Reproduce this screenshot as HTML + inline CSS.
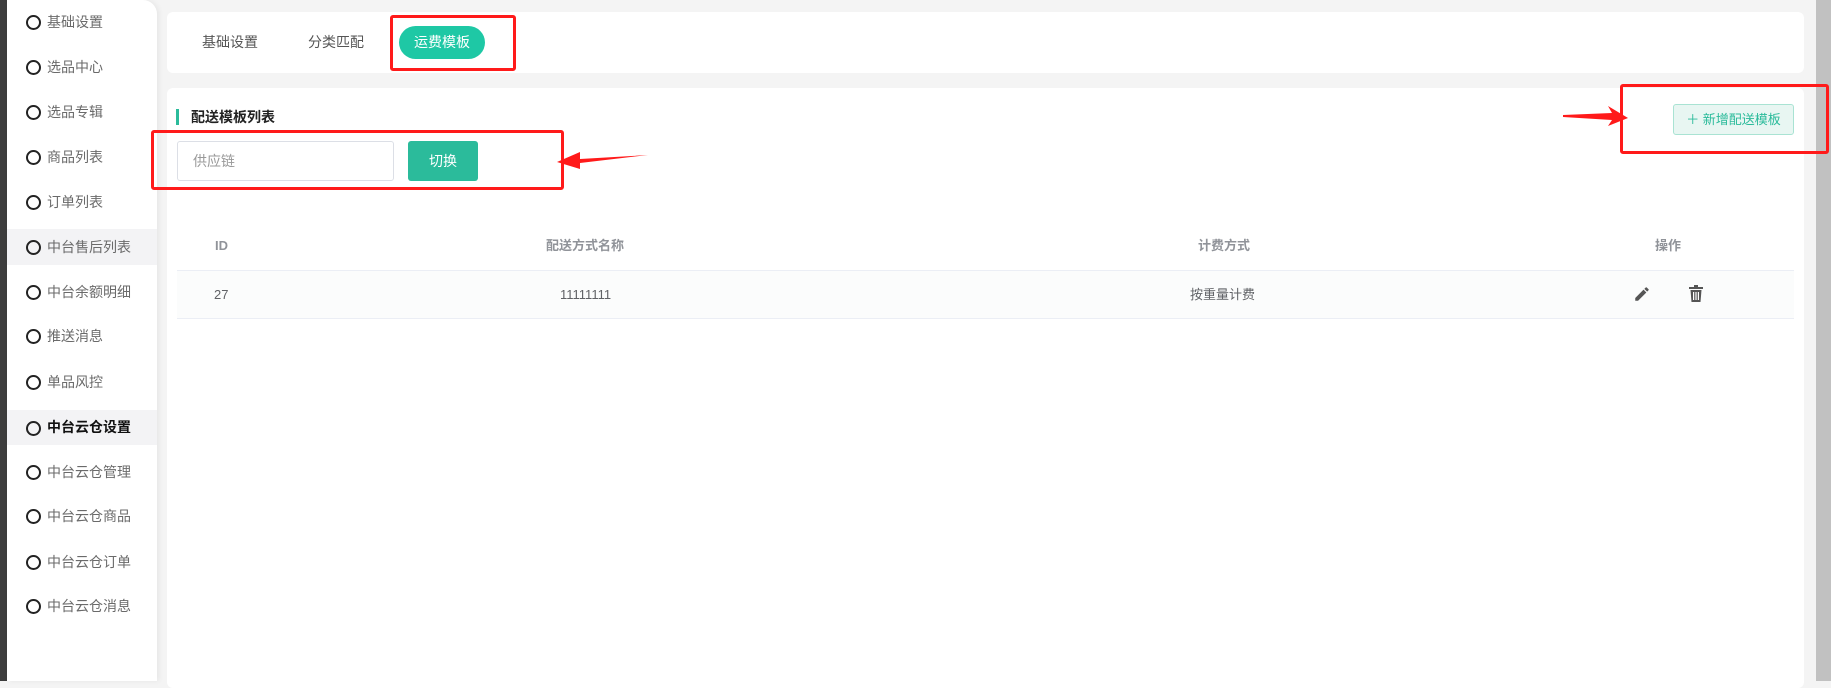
<!DOCTYPE html>
<html><head><meta charset="utf-8"><style>
*{margin:0;padding:0;box-sizing:border-box}
body{width:1831px;height:681px;overflow:hidden;background:#f4f4f4;font-family:"Liberation Sans","Noto Sans CJK SC",sans-serif;font-size:14px;color:#606266;position:relative}
.dark{position:absolute;left:0;top:0;width:7px;height:681px;background:#3d3d3d}
.side{position:absolute;left:7px;top:0;width:150px;height:681px;background:#fff;border-top-right-radius:14px;box-shadow:2px 0 6px rgba(0,0,0,.06)}
.it{position:absolute;left:0;width:150px;height:38px;line-height:38px;padding-left:40px;color:#6a6a6a;font-size:14px}
.it:before{content:"";position:absolute;left:19px;top:50%;margin-top:-7px;width:11px;height:11px;border:2px solid #222;border-radius:50%}
.it.hl{background:#f3f3f5}
.it.b{font-weight:bold;color:#111}
.card{position:absolute;left:167px;width:1637px;background:#fff;border-radius:6px}
.tab{position:absolute;top:34px;color:#555;font-size:14px;line-height:16px}
.red{position:absolute;border:3px solid #ff1a1a;border-radius:3px}
.row span{position:absolute;line-height:16px}
</style></head><body>
<div class="dark"></div>
<div class="side">
<div class="it" style="top:3px">基础设置</div>
<div class="it" style="top:48px">选品中心</div>
<div class="it" style="top:93px">选品专辑</div>
<div class="it" style="top:138px">商品列表</div>
<div class="it" style="top:183px">订单列表</div>
<div class="it hl" style="top:229px;height:36px;line-height:36px">中台售后列表</div>
<div class="it" style="top:273px">中台余额明细</div>
<div class="it" style="top:317px">推送消息</div>
<div class="it" style="top:363px">单品风控</div>
<div class="it hl b" style="top:410px;height:35px;line-height:35px">中台云仓设置</div>
<div class="it" style="top:453px">中台云仓管理</div>
<div class="it" style="top:497px">中台云仓商品</div>
<div class="it" style="top:543px">中台云仓订单</div>
<div class="it" style="top:587px">中台云仓消息</div>
</div>
<div style="position:absolute;left:1816px;top:0;width:15px;height:681px;background:#c1c1c1"></div>
<div class="card" style="top:12px;height:61px"></div>
<div class="tab" style="left:202px">基础设置</div>
<div class="tab" style="left:308px">分类匹配</div>
<div style="position:absolute;left:399px;top:26px;width:86px;height:33px;border-radius:17px;background:#1ec8a5;color:#fff;text-align:center;line-height:33px;font-size:14px">运费模板</div>
<div class="red" style="left:390px;top:15px;width:126px;height:56px"></div>
<div class="card" style="top:88px;height:600px"></div>
<div style="position:absolute;left:176px;top:109px;width:3px;height:16px;background:#2bbb9b"></div>
<div style="position:absolute;left:191px;top:109px;font-weight:bold;color:#222;font-size:14px;line-height:16px">配送模板列表</div>
<div style="position:absolute;left:177px;top:141px;width:217px;height:40px;border:1px solid #dcdfe6;border-radius:3px;color:#999;padding-left:15px;line-height:38px;font-size:14px">供应链</div>
<div style="position:absolute;left:408px;top:141px;width:70px;height:40px;background:#2bbb9b;border-radius:3px;color:#fff;text-align:center;line-height:40px;font-size:14px">切换</div>
<div class="red" style="left:151px;top:130px;width:413px;height:60px"></div>
<svg style="position:absolute;left:550px;top:145px" width="100" height="25"><polygon points="98,10 30,14 30,7 7,17 30,24 30,18" fill="#ff1a1a"/></svg>
<div style="position:absolute;left:1673px;top:104px;width:121px;height:31px;background:#e8f6f2;border:1px solid #a9e3d3;border-radius:3px;color:#2bbb9b;text-align:center;line-height:29px;font-size:13px">＋ 新增配送模板</div>
<div class="red" style="left:1620px;top:84px;width:209px;height:70px"></div>
<svg style="position:absolute;left:1560px;top:104px" width="70" height="25"><polygon points="3,11 52,9 48,2 68,14 48,22 52,16 3,13" fill="#ff1a1a"/></svg>
<div style="position:absolute;left:177px;top:226px;width:1617px;height:45px;border-bottom:1px solid #ebeef5"></div>
<div style="position:absolute;left:177px;top:271px;width:1617px;height:48px;background:#fbfcfc;border-bottom:1px solid #ebeef5"></div>
<div class="row" style="position:absolute;top:238px;left:0;width:1831px;font-weight:bold;color:#909399;font-size:13px">
<span style="left:215px">ID</span>
<span style="left:546px">配送方式名称</span>
<span style="left:1198px">计费方式</span>
<span style="left:1655px">操作</span></div>
<div class="row" style="position:absolute;top:287px;left:0;width:1831px;color:#606266;font-size:13px">
<span style="left:214px">27</span>
<span style="left:560px">11111111</span>
<span style="left:1190px">按重量计费</span></div>
<svg style="position:absolute;left:1633px;top:285px" width="18" height="18" viewBox="0 0 24 24"><path d="M3 17.25V21h3.75L17.8 9.94l-3.75-3.75L3 17.25zM20.7 7.04a1 1 0 000-1.41l-2.34-2.34a1 1 0 00-1.41 0l-1.83 1.83 3.75 3.75 1.83-1.83z" fill="#555"/></svg>
<svg style="position:absolute;left:1688px;top:285px" width="16" height="18" viewBox="0 0 16 18"><rect x="1" y="2" width="14" height="2" fill="#555"/><rect x="6" y="0" width="4" height="2" fill="#555"/><path d="M2.5 5h11l-1 12h-9z" fill="#555"/><rect x="5" y="7" width="1.2" height="8" fill="#fff"/><rect x="7.4" y="7" width="1.2" height="8" fill="#fff"/><rect x="9.8" y="7" width="1.2" height="8" fill="#fff"/></svg>
</body></html>
